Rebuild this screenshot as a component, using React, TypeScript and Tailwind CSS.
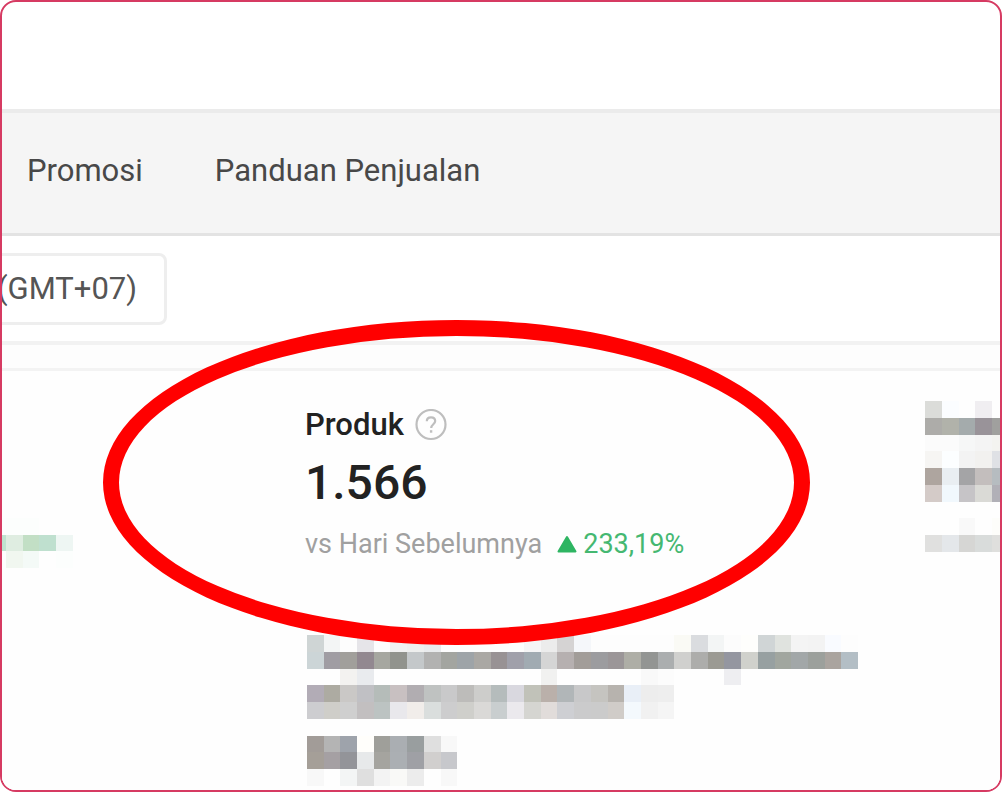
type MosaicProps = { rows: string[]; columns: number; className: string };

const WIDE_BLOCK = [
  'cfd5d5 f3f5f5 fdfdfd e6e5e9 fdfdfd f1f1f1 eeefee e9ebed fdfdfd fdfdfd fdfdfd fdfdfd fdfdfd f5f5f6 ececec d5d3d3 f5f7fa fdfdfd fdfdfd fdfdfd fdfdfd fdfdfd fafaf5 dadcdf f3f5f5 fcfcfc fefefc d0d5d6 e0e3df f4f4f4 f3f3f3 f9fbff fdfdfd',
  'ccd5d7 a09da3 a19f9b 928890 a6a7a0 91938d c4c8ca b2b2b1 a3a5a0 9ea4a8 aaa8a4 989294 a0a0aa a1abb2 d5d5d5 b6b0b0 a29d99 9c9c9f 9b9698 aeaea6 939593 abaeaf d0d0ce adadab 9b9a93 9496a0 d0d1cc 97a0a1 a1a69f a2a7a8 9ca09c aaa49f b3bec5',
  '- - f3f2f0 e9ebee - - - - - - - - - - f1f1f0 - - - - - f9f9f9 fcfcfc - - - eeeef1',
  'b2acb6 adaba2 cac8c6 c0c0c4 b5bcb9 c8c0c1 b1adb1 bfc2c1 c9c9ca bdbcba cdcdcb b5bcbc d9d8df c1c2b9 bab0aa b1b6b8 c8c8c9 c5c4c0 b7b3ae e9eff7 ededed eeeeee',
  'cdcdd0 cfcec9 cfcfcf c2bfc0 bcc3c2 e9e8ec f1edea dadedd cdcdce cfcfcb dad9d7 c9cecf ebe9ed d5d5d1 e1dcda cecfd3 cbcbcc cbcbcb d0ccc8 f4f9fd f1f1f1 f5f5f5',
  '-',
  'a29c98 b4b4b4 9ea3ab fffefb 9f9f9a aaaeb2 999e9f dfdfdf f8f8f8',
  'a59f98 a5a0a3 939499 e7e9ea a5a49f abafb3 9fa0a5 d1cfce c7c8cc',
  'f8f8f8 - f3f5f5 dfdfdf f3f3f3 f9f9f7 ececec - f8f8f8',
];

const NEXT_METRIC = [
  'dbdcd9 fbfdff - f0eef1 -',
  'adaca9 b1b2aa a4abac 999399 a0a09e',
  'fbfbfb fbfbfb f6f7f7 f4f4f4 f3f3f0',
  'f6f5f3 fcfeff f3f3f3 f2f1ef dfe1e5',
  'aea59f e9eef2 a4a4a6 c3bebd b6bcc0',
  'd4cbc8 f1f8fd c6c4c7 dadad6 b1b0b7',
  '-',
  '- - f9f9f9 - fdfdfa',
  'e0e0df e4e7ea d6d6d4 d9dcdb dfdfdd',
];

const PREVIOUS_METRIC = [
  'fdfefe fcfefd fcfefd fefefe -',
  'bfe3cf dfede1 c2dfc5 bfe0cf eef6f3',
  '- f1f7f0 f4faf7 fefefe fcfefd',
];

function Mosaic({ rows, columns, className }: MosaicProps) {
  return (
    <svg
      className={className}
      viewBox={`0 0 ${columns} ${rows.length}`}
      preserveAspectRatio="none"
      shapeRendering="crispEdges"
      aria-hidden="true"
    >
      {rows.map((row, y) =>
        row.split(' ').map((cell, x) =>
          cell === '-' ? null : (
            <rect key={`${x}-${y}`} x={x} y={y} width="1" height="1" fill={`#${cell}`} />
          ),
        ),
      )}
    </svg>
  );
}

function HelpIcon() {
  return (
    <svg viewBox="0 0 32 32" className="size-8" fill="none" stroke="#bebebe" aria-hidden="true">
      <circle cx="16" cy="15.5" r="14.5" strokeWidth="2.2" />
      <path
        d="M11.8 12.3c0-2.5 1.8-4 4.2-4s4.2 1.5 4.2 3.8c0 3.1-4 3.2-4 6.9"
        strokeWidth="2.2"
      />
      <path d="M16.1 21.2v2.5" strokeWidth="2.4" />
    </svg>
  );
}

export default function App() {
  return (
    <div className="flex min-h-screen flex-col overflow-hidden rounded-2xl border-2 border-[#d63a62] bg-white font-[Roboto,sans-serif]">
      <header className="h-[107px] shrink-0" />

      <nav className="flex h-[127px] shrink-0 items-center gap-[72px] border-t-4 border-b-3 border-t-[#ebebeb] border-b-[#e3e3e3] bg-[#f5f5f5] px-[25px] pb-1 text-[31px] leading-10 text-[#484848]">
        <a href="#promosi">Promosi</a>
        <a href="#panduan">Panduan Penjualan</a>
      </nav>

      <div className="flex h-[109px] shrink-0 items-start border-b-4 border-[#f2f2f2] pt-[17px]">
        <button
          type="button"
          className="-ml-3 flex h-[72px] items-center rounded-lg border-3 border-[#eeeeee] pr-[27px] pl-1 text-[31px] leading-10 text-[#555555]"
        >
          (GMT+07)
        </button>
      </div>

      <main className="flex grow flex-col bg-[#fdfdfd] pt-[23px]">
        <div className="grid grow grid-cols-[303px_620px_1fr] border-t-3 border-[#f3f3f3] bg-[#fefefe]">
          <div className="overflow-hidden pt-[147px]">
            <Mosaic rows={PREVIOUS_METRIC} columns={5} className="-ml-[13px] h-[50px] w-[84px]" />
          </div>

          <section className="relative pt-[34px]">
            <div className="flex h-10 items-center gap-[11px]">
              <h2 className="text-[31px] leading-10 font-medium text-[#222222]">Produk</h2>
              <button type="button" aria-label="Info Produk">
                <HelpIcon />
              </button>
            </div>
            <p className="mt-2 text-[48px] leading-[60px] font-medium text-[#222222]">1.566</p>
            <p className="mt-[11px] flex h-10 items-center text-[27px] leading-8 text-[#a0a0a0]">
              vs Hari Sebelumnya
              <svg viewBox="0 0 20 18" className="mr-1.5 ml-[15px] h-[18px] w-5" aria-hidden="true">
                <path
                  d="M10 2 18.5 16.5h-17Z"
                  fill="#2eb562"
                  stroke="#2eb562"
                  strokeWidth="2"
                  strokeLinejoin="round"
                />
              </svg>
              <span className="text-[#45b871]">233,19%</span>
            </p>
            <Mosaic rows={WIDE_BLOCK} columns={33} className="mt-[71px] ml-0.5 h-[151px] w-[551px]" />
            <div className="pointer-events-none absolute -top-[51px] -left-[202px] h-[325px] w-[707px] rounded-[50%] border-16 border-[#ff0000]" />
          </section>

          <div className="overflow-hidden pt-[30px]">
            <Mosaic rows={NEXT_METRIC} columns={5} className="h-[151px] w-[84px] max-w-none" />
          </div>
        </div>
      </main>
    </div>
  );
}
